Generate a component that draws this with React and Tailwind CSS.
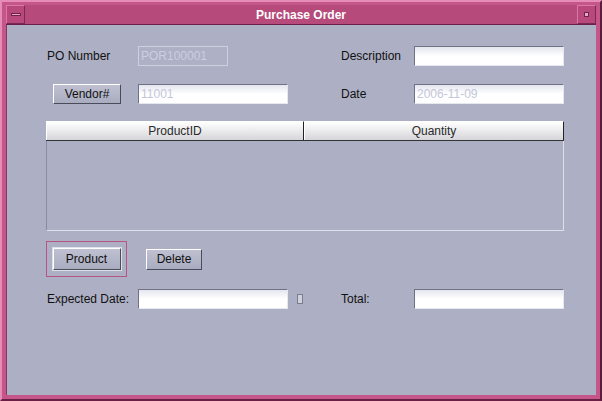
import React from "react";

const font = { fontFamily: '"Liberation Sans", Arial, sans-serif' };

function Field({ w, value, flat }) {
  if (flat) {
    return (
      <div
        className="h-[20px] border border-[#cdd0de] bg-[#aeb1c5] flex items-center pl-[2px] text-[12px] text-[#cbcee2]"
        style={{ width: w }}
      >
        {value}
      </div>
    );
  }
  return (
    <div
      className="h-[20px] border border-t-[#6f7284] border-l-[#6f7284] border-b-[#e6e8f0] border-r-[#e6e8f0] bg-gradient-to-b from-[#e4e6ee] via-white to-white flex items-center pl-[2px] text-[12px] text-[#c3c6da]"
      style={{ width: w }}
    >
      {value}
    </div>
  );
}

function Button({ w, h, children }) {
  return (
    <div
      className="flex items-center justify-center border border-t-white border-l-white border-b-[#4a4c58] border-r-[#4a4c58] bg-gradient-to-b from-[#bfc1d2] to-[#a9acc0] text-[12px] text-[#111]"
      style={{ width: w, height: h }}
    >
      {children}
    </div>
  );
}

export default function App() {
  return (
    <div
      style={font}
      className="w-[602px] h-[401px] bg-[#c5568a] border-2 border-t-[#e58db6] border-l-[#e58db6] border-r-[#5c1c3c] border-b-[#6a1f44] pt-[3px] px-[4px] pb-[4px] flex flex-col"
    >
      {/* title bar */}
      <div className="h-[20px] bg-[#b54a7b] border-b border-[#6a2048] flex items-center relative shrink-0">
        <div className="w-[19px] h-[19px] border border-t-[#d97aa6] border-l-[#d97aa6] border-b-[#7a2a52] border-r-[#7a2a52] bg-[#b9497c] flex items-center justify-center">
          <div className="w-[10px] h-[3px] border border-[#6d2348] bg-[#e6a8c4]" />
        </div>
        <div className="flex-1 text-center text-white font-bold text-[12px] leading-none">
          Purchase Order
        </div>
        <div className="w-[19px] h-[19px] border border-t-[#d97aa6] border-l-[#d97aa6] border-b-[#7a2a52] border-r-[#7a2a52] bg-[#b9497c] flex items-center justify-center">
          <div className="w-[5px] h-[5px] border border-[#6d2348] bg-[#e6a8c4]" />
        </div>
      </div>

      {/* content */}
      <div className="flex-1 bg-[#adb0c4] border-l border-[#7f3a5e] pl-[39px] pt-[21px] flex flex-col text-[12px] text-[#111]">
        {/* row 1 */}
        <div className="flex items-center h-[20px]">
          <div className="w-[92px] pl-[1px]">PO Number</div>
          <Field w={90} value="POR100001" flat />
          <div className="w-[113px]" />
          <div className="w-[73px]">Description</div>
          <Field w={150} value="" />
        </div>

        {/* row 2 */}
        <div className="flex items-center h-[20px] mt-[18px]">
          <div className="w-[92px] pl-[7px]">
            <Button w={68} h={20}>Vendor#</Button>
          </div>
          <Field w={150} value="11001" />
          <div className="w-[53px]" />
          <div className="w-[73px]">Date</div>
          <Field w={150} value="2006-11-09" />
        </div>

        {/* table */}
        <div className="mt-[17px] w-[518px] flex flex-col">
          <div className="flex h-[20px] border-b border-[#333]">
            <div className="w-[258px] flex items-center justify-center border border-t-white border-l-white border-b-0 border-r-[#222] bg-gradient-to-b from-white to-[#d6d6da] text-[#2a2a2a]">
              ProductID
            </div>
            <div className="flex-1 flex items-center justify-center border border-t-white border-l-white border-b-0 border-r-[#222] bg-gradient-to-b from-white to-[#d6d6da] text-[#2a2a2a]">
              Quantity
            </div>
          </div>
          <div className="h-[90px] border-l border-l-[#8a8ca0] border-b border-b-[#dcdee8] border-r border-r-[#dcdee8]" />
        </div>

        {/* buttons */}
        <div className="flex items-center mt-[10px] h-[36px]">
          <div className="w-[81px] h-[36px] border border-[#b65582] flex items-center justify-center">
            <div className="border border-[#dfe1ea]">
              <Button w={68} h={22}>Product</Button>
            </div>
          </div>
          <div className="ml-[19px]">
            <Button w={56} h={21}>Delete</Button>
          </div>
        </div>

        {/* row 5 */}
        <div className="flex items-center h-[20px] mt-[12px]">
          <div className="w-[92px] pl-[1px]">Expected Date:</div>
          <Field w={150} value="" />
          <div className="w-[53px] flex">
            <div className="ml-[9px] w-[6px] h-[10px] border border-[#7a7c8c] bg-[#cfd1dc]" />
          </div>
          <div className="w-[73px]">Total:</div>
          <Field w={150} value="" />
        </div>
      </div>
    </div>
  );
}
